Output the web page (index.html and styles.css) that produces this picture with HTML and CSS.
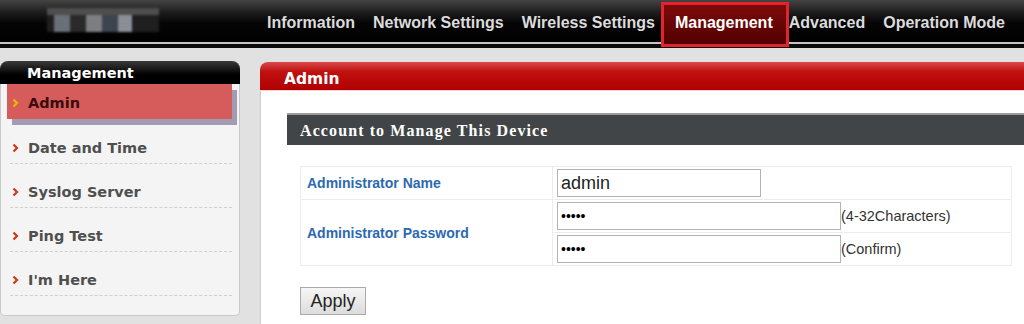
FILE: index.html
```html
<!DOCTYPE html>
<html lang="en">

<head>
  <meta charset="UTF-8">
  <meta name="viewport" content="width=device-width, initial-scale=1.0">
  <title>Management - Admin</title>
  <link rel="stylesheet" href="styles.css">
</head>

<body>
  <div class="page">
    <header class="topbar">
      <div class="logo">
        <span class="logo-top"></span>
        <span class="logo-bottom"><i></i><i></i><i></i><i></i><i></i></span>
      </div>
      <nav class="menu">
        <a href="#" class="menu-item">Information</a>
        <a href="#" class="menu-item">Network Settings</a>
        <a href="#" class="menu-item">Wireless Settings</a>
        <a href="#" class="menu-item active">Management</a>
        <a href="#" class="menu-item tight">Advanced</a>
        <a href="#" class="menu-item">Operation Mode</a>
      </nav>
    </header>
    <div class="topline"></div>

    <div class="layout">
      <aside class="sidebar">
        <div class="sidebar-title">Management</div>
        <ul class="sidebar-list">
          <li class="current"><svg class="chev" width="7" height="10" viewBox="0 0 7 10"><path d="M1.5 1.5 L5 5 L1.5 8.5" fill="none" stroke="#f0b400" stroke-width="2.2"/></svg>Admin</li>
          <li><svg class="chev" width="7" height="10" viewBox="0 0 7 10"><path d="M1.5 1.5 L5 5 L1.5 8.5" fill="none" stroke="#c9391b" stroke-width="2.2"/></svg>Date and Time</li>
          <li><svg class="chev" width="7" height="10" viewBox="0 0 7 10"><path d="M1.5 1.5 L5 5 L1.5 8.5" fill="none" stroke="#c9391b" stroke-width="2.2"/></svg>Syslog Server</li>
          <li><svg class="chev" width="7" height="10" viewBox="0 0 7 10"><path d="M1.5 1.5 L5 5 L1.5 8.5" fill="none" stroke="#c9391b" stroke-width="2.2"/></svg>Ping Test</li>
          <li><svg class="chev" width="7" height="10" viewBox="0 0 7 10"><path d="M1.5 1.5 L5 5 L1.5 8.5" fill="none" stroke="#c9391b" stroke-width="2.2"/></svg>I'm Here</li>
        </ul>
      </aside>

      <main class="content">
        <div class="content-title">Admin</div>
        <div class="content-body">
          <div class="section-title">Account to Manage This Device</div>
          <form class="section">
            <table class="settings">
              <tr>
                <td class="label">Administrator Name</td>
                <td class="field"><input type="text" class="name-input" value="admin"></td>
              </tr>
              <tr>
                <td class="label" rowspan="2">Administrator Password</td>
                <td class="field"><input type="password" class="pass-input" value="admin"><span class="hint">(4-32Characters)</span></td>
              </tr>
              <tr>
                <td class="field"><input type="password" class="pass-input" value="admin"><span class="hint">(Confirm)</span></td>
              </tr>
            </table>
            <div class="actions">
              <button type="button" class="apply">Apply</button>
            </div>
          </form>
        </div>
      </main>
    </div>
  </div>
</body>

</html>
```

FILE: styles.css
```css
* {
  box-sizing: border-box;
}

html,
body {
  margin: 0;
  height: 100%;
  overflow: hidden;
}

body {
  background-color: #e1e1e1;
  font-family: 'Liberation Sans', Arial, sans-serif;
}

.page {
  width: 1024px;
  height: 324px;
  overflow: hidden;
}

/* top bar */

.topbar {
  display: flex;
  align-items: flex-start;
  height: 44px;
  background: linear-gradient(#444 0%, #1c1c1c 30%, #050505 55%, #000 100%);
  border-bottom: 2px solid #c4c4c4;
}

.topline {
  height: 4px;
  background-color: #0a0a0a;
}

.logo {
  display: flex;
  flex-direction: column;
  width: 112px;
  height: 24px;
  margin: 8px 0 0 47px;
  filter: blur(1.2px);
}

.logo-top {
  height: 7px;
  background-color: #4e4e4e;
}

.logo-bottom {
  display: flex;
  height: 17px;
  padding-left: 7px;
  background-color: #1f1f1f;
}

.logo-bottom i {
  width: 16px;
  background-color: #6b6f77;
}

.logo-bottom i:nth-child(2) {
  background-color: #2a2a2a;
}

.logo-bottom i:nth-child(3) {
  background-color: #7c7e80;
}

.logo-bottom i:nth-child(4) {
  background-color: #3d4450;
}

.logo-bottom i:nth-child(5) {
  background-color: #8a8f96;
  width: 14px;
}

.menu {
  display: flex;
  margin-left: 99px;
}

.menu-item {
  display: block;
  height: 44px;
  line-height: 45px;
  padding: 0 9px;
  color: #dcdcdc;
  font-size: 16px;
  font-weight: bold;
  text-decoration: none;
}

.menu-item.active {
  position: relative;
  z-index: 1;
  height: 45px;
  margin: 2px 0 0 -3px;
  padding: 0 13px 0 11px;
  line-height: 36px;
  color: #fff;
  border: 3px solid #e3242c;
  background: linear-gradient(#7e0a0a, #520000);
}

.menu-item.tight {
  padding-left: 0;
}

/* layout */

.layout {
  display: flex;
  gap: 20px;
  padding-top: 13px;
}

/* sidebar */

.sidebar {
  width: 240px;
  flex-shrink: 0;
  height: 255px;
  background-color: #f4f4f4;
  border: 1px solid #c9c9c9;
  border-top: none;
  border-radius: 8px 8px 5px 5px;
}

.sidebar-title {
  height: 23px;
  margin: 0 -1px;
  padding-left: 27px;
  line-height: 25px;
  border-radius: 8px 8px 0 0;
  background: linear-gradient(#3a3a3a, #000 60%);
  color: #fff;
  font-family: 'DejaVu Sans', Verdana, sans-serif;
  font-size: 14.5px;
  font-weight: bold;
}

.sidebar-list {
  list-style: none;
  margin: 0;
  padding: 0 7px 0 9px;
}

.sidebar-list li {
  display: flex;
  align-items: center;
  gap: 9px;
  height: 44px;
  padding: 18px 0 5px 2px;
  border-bottom: 1px dashed #cfcfcf;
  color: #4f4f4f;
  font-family: 'DejaVu Sans', Verdana, sans-serif;
  font-size: 14.5px;
  font-weight: bold;
  line-height: 20px;
}

.sidebar-list li.current {
  height: 35px;
  margin: 0 0 1px -3px;
  padding: 2px 0 0 5px;
  border-bottom: none;
  background-color: #d65c5c;
  box-shadow: 5px 6px 0 #a29cb2;
  color: #3a0c0c;
}

.chev {
  flex-shrink: 0;
}

/* main content */

.content {
  width: 790px;
  flex-shrink: 0;
  min-height: 300px;
  margin-top: 1px;
  background-color: #fff;
  border-left: 1px solid #cfcfcf;
  border-radius: 8px 8px 0 0;
}

.content-title {
  height: 29px;
  margin-left: -1px;
  padding-left: 24px;
  line-height: 34px;
  border-radius: 8px 8px 0 0;
  background: linear-gradient(#d84a4a 0%, #c01010 35%, #b00000 100%);
  border-bottom: 1px solid #f0d0d0;
  color: #fff;
  font-family: 'DejaVu Sans', Verdana, sans-serif;
  font-size: 15.5px;
  font-weight: bold;
}

.content-body {
  padding: 22px 0 0 26px;
}

.section-title {
  height: 32px;
  padding-left: 13px;
  line-height: 32px;
  border-top: 2px solid #9a9c9c;
  background-color: #414547;
  color: #fff;
  font-family: 'Liberation Serif', 'Times New Roman', serif;
  font-size: 16px;
  font-weight: bold;
  letter-spacing: 1.1px;
}

.section {
  padding: 21px 0 0 13px;
}

.settings {
  width: 712px;
  border-collapse: collapse;
  border: 1px solid #e9e9e9;
}

.settings td {
  height: 33px;
  padding: 0;
  border: 1px solid #ececec;
}

.settings td.label {
  width: 252px;
  padding-left: 6px;
  color: #2b69b2;
  font-size: 14px;
  font-weight: bold;
}

.settings td.field {
  padding-left: 4px;
  font-size: 0;
}

.settings input {
  height: 28px;
  padding: 0 3px;
  border: 1px solid #b3b3b3;
  border-radius: 0;
  color: #222;
  font-family: 'Liberation Sans', Arial, sans-serif;
  font-size: 18px;
  vertical-align: middle;
}

.name-input {
  width: 204px;
}

.settings .pass-input {
  width: 284px;
  font-size: 14px;
  color: #000;
}

.hint {
  color: #333;
  font-size: 14.5px;
  vertical-align: middle;
}

.actions {
  padding-top: 21px;
}

.apply {
  width: 66px;
  height: 28px;
  padding: 0;
  border: 1px solid #aaa;
  border-radius: 0;
  background: linear-gradient(#f6f6f6, #dcdcdc);
  color: #222;
  font-family: 'Liberation Sans', Arial, sans-serif;
  font-size: 18px;
}
```
